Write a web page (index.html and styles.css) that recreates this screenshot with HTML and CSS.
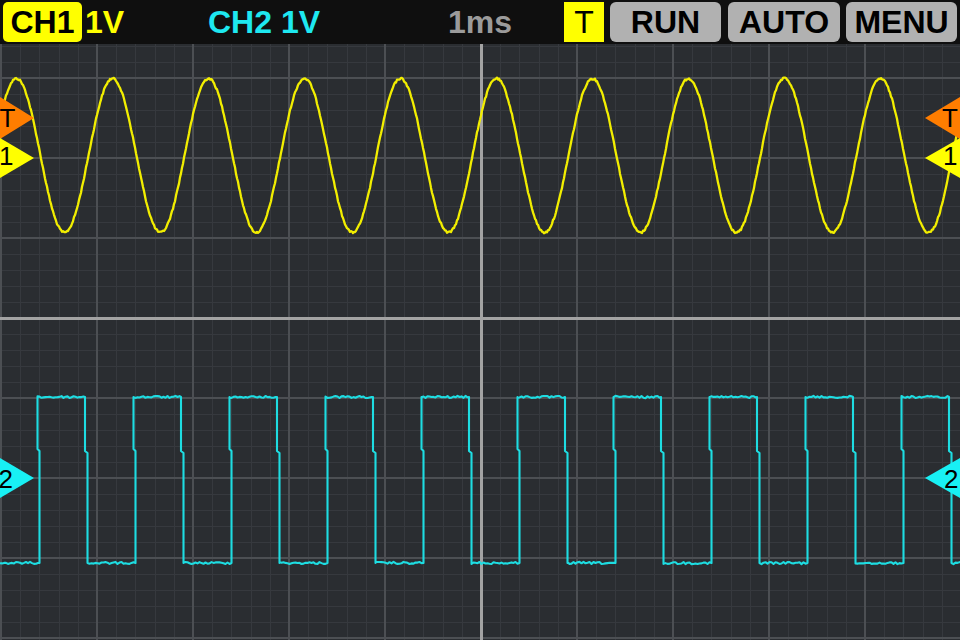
FILE: index.html
```html
<!DOCTYPE html>
<html lang="en">
<head>
<meta charset="utf-8">
<title>Oscilloscope</title>
<link rel="stylesheet" href="styles.css">
</head>
<body>
<div class="scope">
  <header class="bar">
    <span class="ch1">CH1</span>
    <span class="v1">1V</span>
    <span class="ch2">CH2 1V</span>
    <span class="tb">1ms</span>
    <span class="trig">T</span>
    <span class="btn run">RUN</span>
    <span class="btn auto">AUTO</span>
    <span class="btn menu">MENU</span>
  </header>
  <svg class="plot" viewBox="0 44 960 596" width="960" height="596" xmlns="http://www.w3.org/2000/svg">
    <g id="grid" shape-rendering="crispEdges"></g>
    <path id="w1" class="wave1" d=""></path>
    <path id="w2" class="wave2" d=""></path>
    <g class="markers">
      <polygon class="m-trig" points="0,97 34,118 0,139"></polygon>
      <polygon class="m-ch1" points="0,138 34,158 0,178"></polygon>
      <polygon class="m-ch2" points="0,458 34,478 0,498"></polygon>
      <polygon class="m-trig" points="960,97 925,118 960,139"></polygon>
      <polygon class="m-ch1" points="960,138 925,158 960,178"></polygon>
      <polygon class="m-ch2" points="960,458 925,478 960,498"></polygon>
      <text class="mtxt" x="7.5" y="127" text-anchor="middle">T</text>
      <text class="mtxt" x="-1" y="164.5">1</text>
      <text class="mtxt" x="-1.5" y="487.5">2</text>
      <text class="mtxt" x="950" y="127" text-anchor="middle">T</text>
      <text class="mtxt" x="943" y="164.5">1</text>
      <text class="mtxt" x="944" y="487.5">2</text>
    </g>
  </svg>
</div>
<script src="app.js"></script>
</body>
</html>
```

FILE: styles.css
```css
* { box-sizing: border-box; }
html, body {
  margin: 0;
  padding: 0;
  background: #2a2d31;
}
.scope {
  width: 960px;
  height: 640px;
  display: flex;
  flex-direction: column;
  overflow: hidden;
  font-family: "Liberation Sans", Arial, sans-serif;
}
.bar {
  height: 44px;
  flex: 0 0 44px;
  background: #0f0f0f;
  display: flex;
  align-items: center;
  padding: 0 0 0 3px;
  font-size: 32px;
  font-weight: bold;
  line-height: 41px;
  white-space: nowrap;
}
.bar > span {
  height: 40px;
  display: block;
}
.ch1 {
  width: 79px;
  background: #ffff00;
  color: #000;
  border-radius: 5px;
  text-align: center;
}
.v1 {
  width: 126px;
  padding-left: 3px;
  color: #ffff00;
}
.ch2 {
  width: 240px;
  color: #1ee8f0;
}
.tb {
  width: 116px;
  color: #9b9b9b;
}
.trig {
  width: 40px;
  background: #ffff00;
  color: #000;
  font-weight: normal;
  text-align: center;
}
.btn {
  width: 111px;
  margin-left: 6px;
  background: #b1b1b1;
  color: #000;
  border-radius: 6px;
  text-align: center;
}
.auto {
  width: 112px;
  margin-left: 7px;
}
.plot {
  display: block;
  flex: 0 0 596px;
}
.wave1 {
  fill: none;
  stroke: #f2ee00;
  stroke-width: 2.3;
  stroke-linejoin: round;
}
.wave2 {
  fill: none;
  stroke: #1edde2;
  stroke-width: 2.1;
  stroke-linejoin: round;
}
.m-trig { fill: #ff7d00; }
.m-ch1 { fill: #ffff00; }
.m-ch2 { fill: #18f0f4; }
.mtxt {
  font-family: "Liberation Sans", Arial, sans-serif;
  font-size: 26px;
  fill: #000;
}
```

FILE: app.js
```js
(function () {
  var NS = 'http://www.w3.org/2000/svg';
  var grid = document.getElementById('grid');
  function addPath(d, color, w) {
    var p = document.createElementNS(NS, 'path');
    p.setAttribute('d', d);
    p.setAttribute('stroke', color);
    p.setAttribute('stroke-width', w);
    p.setAttribute('fill', 'none');
    grid.appendChild(p);
  }
  var minor = '', major = '', center = '';
  var i, x, y;
  for (i = 0; i <= 50; i++) {
    x = Math.round(1 + i * 19.2);
    if (i === 25) { center += 'M481 44V640'; continue; }
    if (i % 5 === 0) { major += 'M' + x + ' 44V640'; }
    else { minor += 'M' + (x + 0.5) + ' 44V640'; }
  }
  for (i = -2; i <= 35; i++) {
    y = 78 + i * 16;
    if (y < 44 || y > 640) continue;
    if (y === 318) { center += 'M0 318.5H960'; continue; }
    if (i % 5 === 0) { major += 'M0 ' + y + 'H960'; }
    else { minor += 'M0 ' + (y + 0.5) + 'H960'; }
  }
  addPath(minor, '#36393e', 1);
  addPath(major, '#4c4f53', 2);
  addPath(center, '#a3a3a3', 3);

  var seed = 12345;
  function rnd() {
    seed = (seed * 1103515245 + 12345) % 2147483648;
    return seed / 2147483648;
  }
  function noise(a) { return (rnd() - 0.5) * 2 * a; }

  // channel 1: sine
  var d1 = '';
  for (x = 0; x <= 960; x += 1) {
    y = 155.5 - 77 * Math.cos(2 * Math.PI * (x - 16.5) / 96) + noise(1.0);
    d1 += (x === 0 ? 'M' : 'L') + x + ' ' + y.toFixed(1);
  }
  document.getElementById('w1').setAttribute('d', d1);

  // channel 2: square
  var hi = 397, lo = 563;
  var d2 = 'M0 ' + lo;
  function flat(x0, x1, lvl) {
    var s = '';
    for (var xx = x0; xx < x1; xx += 2) {
      s += 'L' + xx + ' ' + (lvl + noise(1.1)).toFixed(1);
    }
    return s + 'L' + x1 + ' ' + lvl;
  }
  var cur = 0;
  for (var k = 0; k < 10; k++) {
    var r = 37 + 96 * k, f = 85 + 96 * k;
    d2 += flat(cur, r + 2.5, lo);
    d2 += 'L' + (r + 2.5) + ' 451L' + (r + 0.5) + ' 449L' + (r + 0.5) + ' ' + hi;
    d2 += flat(r + 0.5, f, hi);
    d2 += 'L' + f + ' 451L' + (f + 2.5) + ' 453L' + (f + 2.5) + ' ' + lo;
    cur = f + 2.5;
  }
  d2 += flat(cur, 960, lo);
  document.getElementById('w2').setAttribute('d', d2);
})();
```
